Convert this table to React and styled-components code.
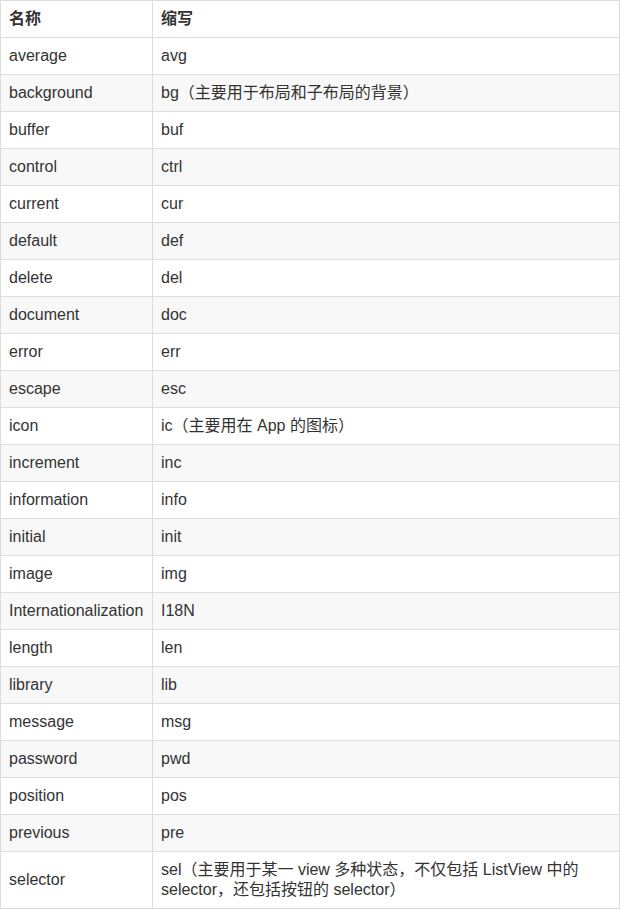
import React from 'react';
import styled, { createGlobalStyle } from 'styled-components';

const GlobalStyle = createGlobalStyle`
  html, body {
    margin: 0;
    padding: 0;
    background: #fff;
  }
  body {
    font-family: "Liberation Sans", Arial, "Noto Sans CJK SC", sans-serif;
    color: #333;
  }
`;

const Table = styled.table`
  width: 620px;
  border-collapse: collapse;
  border-spacing: 0;
  table-layout: fixed;
  font-size: 16px;
  line-height: 20px;
`;

const Row = styled.tr`
  background: ${(p) => (p.$striped ? '#f8f8f8' : '#fff')};
`;

const HeadCell = styled.th`
  border: 1px solid #ddd;
  padding: 8px;
  text-align: left;
  font-weight: bold;
  width: ${(p) => p.$width || 'auto'};
`;

const Cell = styled.td`
  border: 1px solid #ddd;
  padding: 8px;
  vertical-align: middle;
`;

const rows = [
  ['average', 'avg'],
  ['background', 'bg（主要用于布局和子布局的背景）'],
  ['buffer', 'buf'],
  ['control', 'ctrl'],
  ['current', 'cur'],
  ['default', 'def'],
  ['delete', 'del'],
  ['document', 'doc'],
  ['error', 'err'],
  ['escape', 'esc'],
  ['icon', 'ic（主要用在 App 的图标）'],
  ['increment', 'inc'],
  ['information', 'info'],
  ['initial', 'init'],
  ['image', 'img'],
  ['Internationalization', 'I18N'],
  ['length', 'len'],
  ['library', 'lib'],
  ['message', 'msg'],
  ['password', 'pwd'],
  ['position', 'pos'],
  ['previous', 'pre'],
  ['selector', 'sel（主要用于某一 view 多种状态，不仅包括 ListView 中的 selector，还包括按钮的 selector）'],
];

export default function App() {
  return (
    <>
      <GlobalStyle />
      <Table>
        <thead>
          <Row>
            <HeadCell $width="135px">名称</HeadCell>
            <HeadCell>缩写</HeadCell>
          </Row>
        </thead>
        <tbody>
          {rows.map(([name, abbr], i) => (
            <Row key={name} $striped={i % 2 === 1}>
              <Cell>{name}</Cell>
              <Cell>{abbr}</Cell>
            </Row>
          ))}
        </tbody>
      </Table>
    </>
  );
}
